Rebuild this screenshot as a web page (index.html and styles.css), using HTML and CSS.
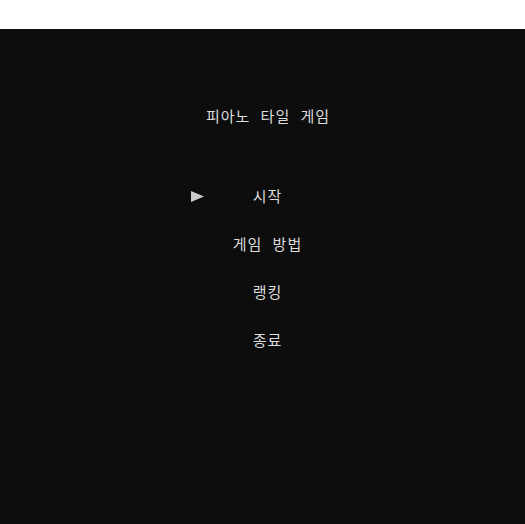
FILE: index.html
```html
<!DOCTYPE html>
<html lang="ko">
<head>
<meta charset="utf-8">
<link rel="stylesheet" href="styles.css">
</head>
<body>
<div class="topbar"></div>
<main class="screen">
  <h1 class="title">피아노 타일 게임</h1>
  <ul class="menu">
    <li class="item selected"><span class="cursor"><svg width="13" height="11" viewBox="0 0 13 11"><polygon points="0,0 13,5.5 0,11" fill="#cccccc"/></svg></span><span class="label">시작</span><span></span></li>
    <li class="item"><span class="cursor"></span><span class="label">게임 방법</span><span></span></li>
    <li class="item"><span class="cursor"></span><span class="label">랭킹</span><span></span></li>
    <li class="item"><span class="cursor"></span><span class="label">종료</span><span></span></li>
  </ul>
</main>
</body>
</html>
```
FILE: styles.css
```css
html, body {
  margin: 0;
  padding: 0;
  height: 100%;
  background: #ffffff;
}
body {
  display: flex;
  flex-direction: column;
  font-family: "Noto Sans CJK KR", "Noto Sans", sans-serif;
}
.topbar {
  height: 29px;
  background: #ffffff;
  flex: none;
}
.screen {
  flex: 1;
  background: #0d0d0d;
  display: flex;
  flex-direction: column;
  align-items: center;
  padding-top: 77px;
  padding-left: 11px;
}
.title {
  margin: 0;
  font-size: 15px;
  font-weight: normal;
  line-height: 20px;
  letter-spacing: 1px;
  word-spacing: 5px;
  color: #dcdcdc;
}
.menu {
  list-style: none;
  margin: 46px 0 0;
  padding: 0;
  width: 153px;
  margin-left: -1px;
}
.item {
  display: grid;
  grid-template-columns: 1fr auto 1fr;
  align-items: center;
  height: 48px;
  line-height: 48px;
  color: #dcdcdc;
  font-size: 15px;
}
.label {
  letter-spacing: 1px;
  word-spacing: 5px;
}
.cursor {
  display: flex;
  align-items: center;
}
.cursor svg {
  display: block;
}
```
